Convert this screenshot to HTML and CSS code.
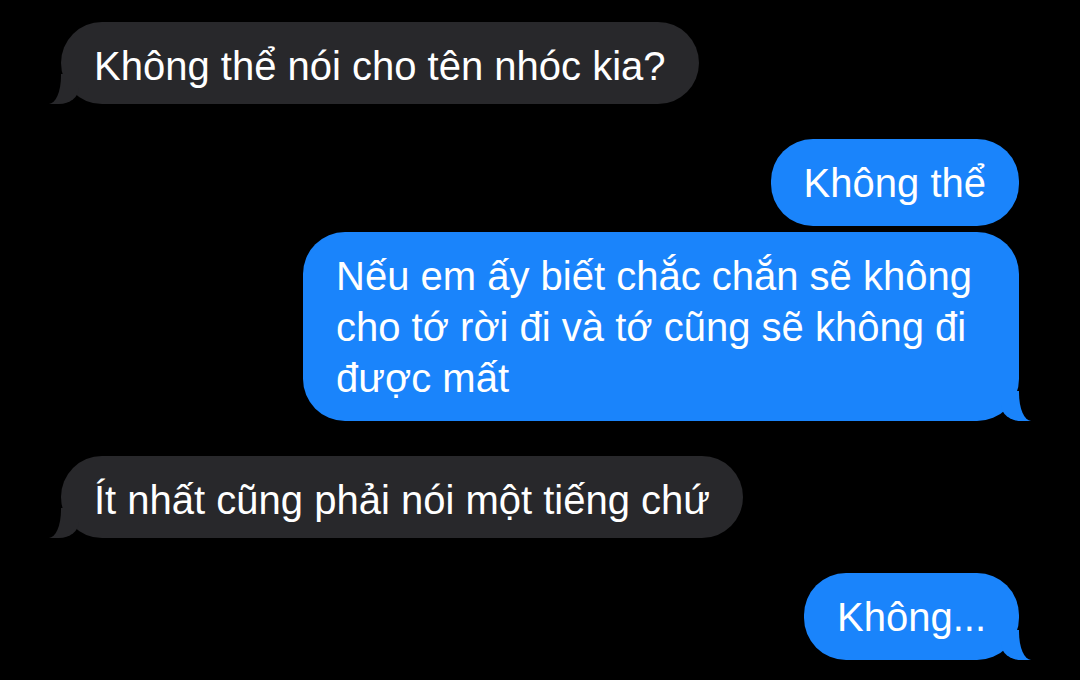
FILE: index.html
```html
<!DOCTYPE html>
<html lang="vi">
  <head>
    <meta charset="UTF-8" />
    <meta name="viewport" content="width=device-width, initial-scale=1.0" />
    <title>Tin nhắn</title>
    <link rel="stylesheet" href="styles.css">
  </head>
  <body>
    <div class="chat">
      <div class="msg received tail">Không thể nói cho tên nhóc kia?</div>

      <div class="msg sent group">Không thể</div>
      <div class="msg sent tail grouped">Nếu em ấy biết chắc chắn sẽ không cho tớ rời đi và tớ cũng sẽ không đi được mất</div>

      <div class="msg received tail">Ít nhất cũng phải nói một tiếng chứ</div>

      <div class="msg sent tail">Không...</div>
    </div>
  </body>
</html>
```

FILE: styles.css
```css
* {
  margin: 0;
  padding: 0;
  box-sizing: border-box;
}
body {
  background: #000;
  font-family: "Liberation Sans", Arial, sans-serif;
  color: #fff;
}
.chat {
  display: flex;
  flex-direction: column;
  padding: 22px 61px;
}
.msg {
  position: relative;
  max-width: 716px;
  padding: 19px 33px 17px 33px;
  font-size: 40px;
  line-height: 51px;
  border-radius: 42px;
  margin-top: 35px;
}
.msg:first-child {
  margin-top: 0;
}
.msg.grouped {
  margin-top: 6px;
}
.received {
  align-self: flex-start;
  background: #28282b;
  padding-bottom: 12px;
}
.sent {
  align-self: flex-end;
  background: #1a84fb;
}

/* bubble tails */
.tail::before,
.tail::after {
  content: "";
  position: absolute;
  bottom: 0;
  height: 30px;
}
.sent.tail::before {
  right: -12px;
  width: 30px;
  background: #1a84fb;
  border-bottom-left-radius: 20px 16px;
}
.sent.tail::after {
  right: -40px;
  width: 40px;
  background: #000;
  border-bottom-left-radius: 12px 28px;
}
.received.tail::before {
  left: -12px;
  width: 30px;
  background: #28282b;
  border-bottom-right-radius: 20px 16px;
}
.received.tail::after {
  left: -40px;
  width: 40px;
  background: #000;
  border-bottom-right-radius: 12px 28px;
}
```
